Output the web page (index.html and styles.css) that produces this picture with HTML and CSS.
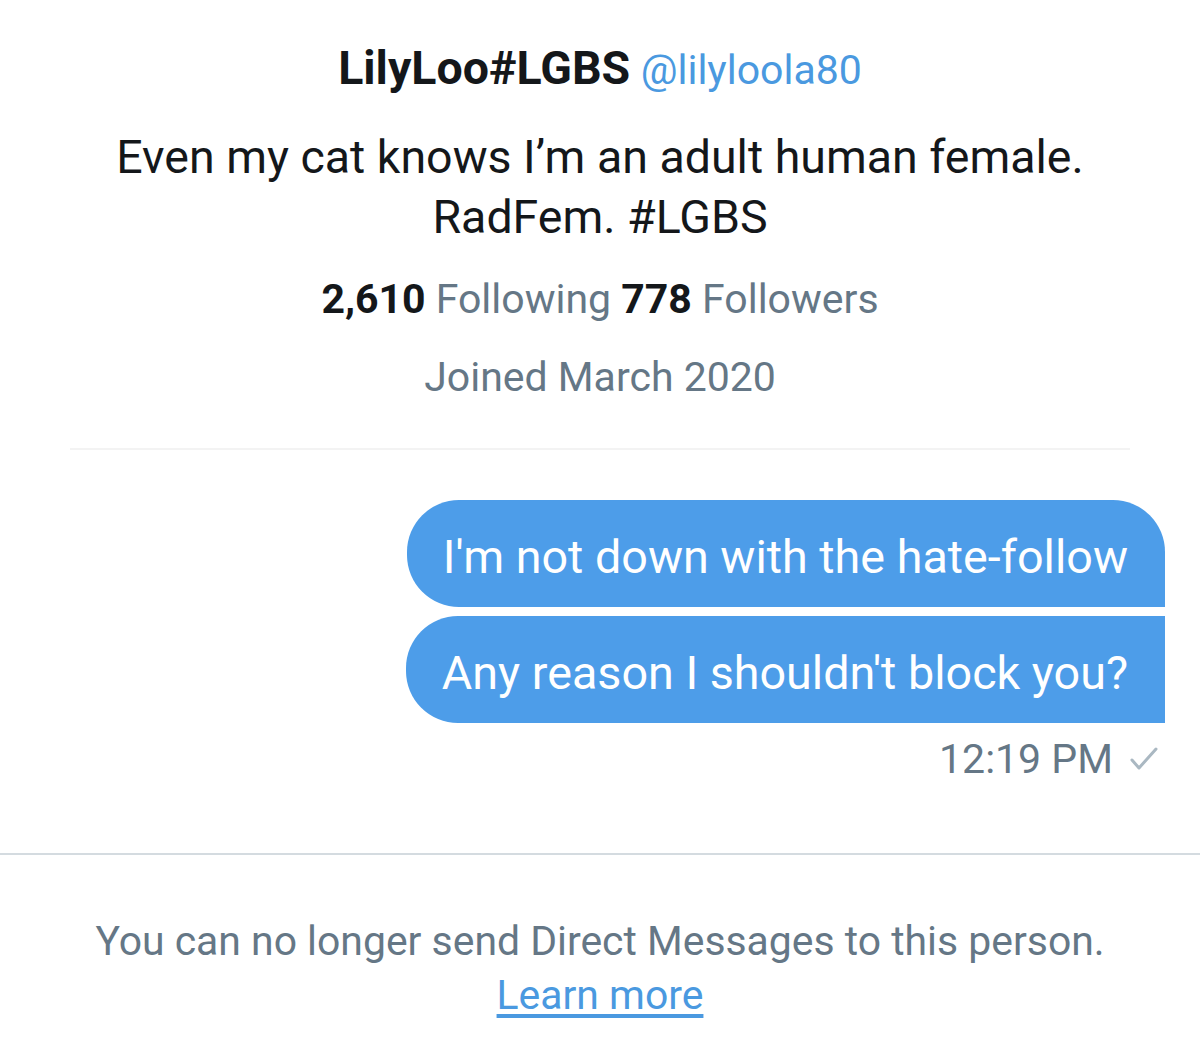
FILE: index.html
```html
<!DOCTYPE html>
<html>
<head>
<meta charset="utf-8">
<link rel="stylesheet" href="styles.css">
</head>
<body>
<div class="page">
  <section class="profile">
    <div class="name-line"><span class="name">LilyLoo#LGBS</span> <span class="handle">@lilyloola80</span></div>
    <p class="bio">Even my cat knows I’m an adult human female.<br>RadFem. #LGBS</p>
    <div class="stats"><b>2,610</b> Following <b>778</b> Followers</div>
    <div class="joined">Joined March 2020</div>
  </section>
  <hr class="divider">
  <section class="messages">
    <div class="bubble first">I'm not down with the hate-follow</div>
    <div class="bubble last">Any reason I shouldn't block you?</div>
    <div class="meta">12:19 PM <svg class="check" width="30" height="26" viewBox="0 0 30 26"><path d="M3 14 L10 22 L27 3" fill="none" stroke="#aab8c2" stroke-width="3" stroke-linecap="round" stroke-linejoin="round"/></svg></div>
  </section>
  <footer class="notice">
    <p>You can no longer send Direct Messages to this person.<br><a href="#">Learn more</a></p>
  </footer>
</div>
</body>
</html>
```
FILE: styles.css
```css
html, body {
  margin: 0;
  padding: 0;
  background: #fff;
}
body {
  font-family: Roboto, "Liberation Sans", sans-serif;
  color: #14171a;
}
.page {
  width: 1200px;
}
.profile {
  text-align: center;
  padding-top: 40px;
}
.name-line {
  font-size: 42px;
  line-height: 56px;
}
.name {
  font-size: 46.5px;
  font-weight: 700;
  color: #14171a;
}
.handle {
  font-size: 41px;
  color: #4a99e0;
}
.bio {
  margin: 29px 0 0;
  font-size: 46.5px;
  line-height: 60px;
  color: #14171a;
}
.stats {
  margin-top: 27px;
  font-size: 41px;
  line-height: 50px;
  color: #657786;
}
.stats b {
  color: #14171a;
  font-weight: 700;
}
.joined {
  margin-top: 28px;
  font-size: 41px;
  line-height: 50px;
  color: #657786;
}
.divider {
  margin: 46px 70px 0;
  border: 0;
  height: 2px;
  background: #f3f3f3;
}
.messages {
  display: flex;
  flex-direction: column;
  align-items: flex-end;
  padding: 50px 35px 0 0;
}
.bubble {
  background: #4d9de9;
  color: #fff;
  font-size: 46.7px;
  line-height: 99px;
  padding: 8px 37px 0 36px;
  white-space: nowrap;
}
.bubble.first {
  border-radius: 52px 52px 0 52px;
}
.bubble.last {
  margin-top: 9px;
  border-radius: 52px 0 0 52px;
}
.meta {
  display: flex;
  align-items: center;
  margin-top: 11px;
  font-size: 41px;
  line-height: 50px;
  color: #657786;
  padding-right: 6px;
}
.check {
  margin-left: 16px;
}
.notice {
  margin-top: 69px;
  border-top: 2px solid #d4dbe0;
  text-align: center;
  padding-top: 59px;
}
.notice p {
  margin: 0;
  font-size: 40.9px;
  line-height: 54px;
  color: #657786;
}
.notice a {
  color: #4a99e0;
  text-decoration: underline;
  text-underline-offset: 5px;
}
```
